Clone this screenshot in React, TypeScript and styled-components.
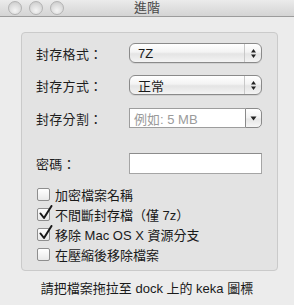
import styled, { createGlobalStyle } from "styled-components";

const GlobalStyle = createGlobalStyle`
  html, body {
    margin: 0;
    padding: 0;
    background: #ececec;
  }
  body {
    font-family: "Liberation Sans", "Noto Sans CJK TC", sans-serif;
    font-size: 13px;
    color: #1a1a1a;
    text-spacing-trim: space-all;
  }
`;

const Window = styled.div`
  width: 294px;
  height: 305px;
  background: #ececec;
  display: flex;
  flex-direction: column;
  overflow: hidden;
`;

const TitleBar = styled.div`
  height: 16px;
  flex-shrink: 0;
  position: relative;
  display: flex;
  align-items: center;
  justify-content: center;
  background: linear-gradient(#ebebeb, #d4d4d4);
  border-bottom: 1px solid #9c9c9c;
`;

const Lights = styled.div`
  position: absolute;
  left: 8px;
  top: 1px;
  display: flex;
  gap: 7px;
`;

const Light = styled.div`
  width: 12px;
  height: 12px;
  border-radius: 50%;
  border: 1px solid #b3b3b3;
  background: radial-gradient(circle at 50% 70%, #f4f4f4 0%, #dcdcdc 55%, #c4c4c4 100%);
`;

const Title = styled.div`
  font-size: 13px;
  color: #4a4a4a;
  line-height: 16px;
`;

const GroupBox = styled.div`
  margin: 15px 16px 0 21px;
  height: 239px;
  box-sizing: border-box;
  background: #e3e3e3;
  border: 1px solid #cacaca;
  border-radius: 4px;
  padding: 10px 15px 0 14px;
  display: flex;
  flex-direction: column;
`;

const FieldRow = styled.div<{ $top?: number }>`
  display: flex;
  align-items: center;
  height: 20px;
  margin-top: ${(p) => p.$top ?? 0}px;
`;

const Label = styled.div`
  width: 93px;
  flex-shrink: 0;
  font-size: 13px;
  color: #1e1e1e;
  letter-spacing: 0.3px;
`;

const PopUp = styled.div`
  width: 134px;
  height: 20px;
  box-sizing: border-box;
  border: 1px solid #8a8a8a;
  border-radius: 6px;
  background: linear-gradient(#ffffff 0%, #f3f3f3 45%, #e4e4e4 55%, #f4f4f4 100%);
  display: flex;
  align-items: center;
  box-shadow: 0 1px 0 rgba(0, 0, 0, 0.08);
`;

const PopUpText = styled.div`
  flex: 1;
  padding-left: 8px;
  font-size: 13px;
  color: #1a1a1a;
`;

const Arrows = styled.div`
  width: 16px;
  height: 100%;
  border-left: 1px solid #c8c8c8;
  display: flex;
  align-items: center;
  justify-content: center;
`;

const Combo = styled.div`
  width: 134px;
  height: 20px;
  display: flex;
`;

const ComboField = styled.div`
  flex: 1;
  box-sizing: border-box;
  background: #fff;
  border: 1px solid #9d9d9d;
  border-right: none;
  font-size: 13px;
  color: #9b9b9b;
  padding-left: 4px;
  display: flex;
  align-items: center;
`;

const ComboButton = styled.div`
  width: 17px;
  box-sizing: border-box;
  border: 1px solid #8a8a8a;
  border-radius: 0 5px 5px 0;
  background: linear-gradient(#ffffff 0%, #f1f1f1 50%, #e6e6e6 55%, #f6f6f6 100%);
  display: flex;
  align-items: center;
  justify-content: center;
`;

const TextField = styled.div`
  width: 134px;
  height: 21px;
  box-sizing: border-box;
  background: #fff;
  border: 1px solid #a5a5a5;
  border-top-color: #8c8c8c;
`;

const CheckList = styled.div`
  margin-top: 11px;
  display: flex;
  flex-direction: column;
`;

const CheckRow = styled.div`
  height: 20px;
  display: flex;
  align-items: center;
  gap: 5px;
  font-size: 13px;
  color: #1a1a1a;
  margin-left: 1px;
`;

const Box = styled.div`
  width: 13px;
  height: 13px;
  box-sizing: border-box;
  border: 1px solid #8e8e8e;
  border-radius: 2px;
  background: linear-gradient(#ffffff, #e9e9e9);
  position: relative;
  flex-shrink: 0;
`;

const Tick = styled.svg`
  position: absolute;
  left: 1px;
  top: -4px;
`;

const Footer = styled.div`
  flex: 1;
  display: flex;
  align-items: center;
  justify-content: center;
  font-size: 13px;
  color: #1a1a1a;
  padding-bottom: 1px;
`;

const UpDown = () => (
  <svg width="7" height="11" viewBox="0 0 7 11">
    <path d="M3.5 1 L6 4.5 L1 4.5 Z" fill="#222" />
    <path d="M3.5 10 L6 6.5 L1 6.5 Z" fill="#222" />
  </svg>
);

const Down = () => (
  <svg width="7" height="5" viewBox="0 0 7 5">
    <path d="M0.5 0.5 L6.5 0.5 L3.5 4.5 Z" fill="#222" />
  </svg>
);

const CheckBox = ({ checked, label }: { checked?: boolean; label: string }) => (
  <CheckRow>
    <Box>
      {checked && (
        <Tick width="14" height="15" viewBox="0 0 14 15">
          <path
            d="M1.5 8.5 L5 13 L12.5 1"
            fill="none"
            stroke="#1a1a1a"
            strokeWidth="2"
            strokeLinecap="round"
            strokeLinejoin="round"
          />
        </Tick>
      )}
    </Box>
    {label}
  </CheckRow>
);

export default function App() {
  return (
    <>
      <GlobalStyle />
      <Window>
        <TitleBar>
          <Lights>
            <Light />
            <Light />
            <Light />
          </Lights>
          <Title>進階</Title>
        </TitleBar>
        <GroupBox>
          <FieldRow>
            <Label>封存格式：</Label>
            <PopUp>
              <PopUpText>7Z</PopUpText>
              <Arrows>
                <UpDown />
              </Arrows>
            </PopUp>
          </FieldRow>
          <FieldRow $top={12}>
            <Label>封存方式：</Label>
            <PopUp>
              <PopUpText>正常</PopUpText>
              <Arrows>
                <UpDown />
              </Arrows>
            </PopUp>
          </FieldRow>
          <FieldRow $top={13}>
            <Label>封存分割：</Label>
            <Combo>
              <ComboField>例如: 5 MB</ComboField>
              <ComboButton>
                <Down />
              </ComboButton>
            </Combo>
          </FieldRow>
          <FieldRow $top={25}>
            <Label>密碼：</Label>
            <TextField />
          </FieldRow>
          <CheckList>
            <CheckBox label="加密檔案名稱" />
            <CheckBox checked label="不間斷封存檔（僅 7z）" />
            <CheckBox checked label="移除 Mac OS X 資源分支" />
            <CheckBox label="在壓縮後移除檔案" />
          </CheckList>
        </GroupBox>
        <Footer>請把檔案拖拉至 dock 上的 keka 圖標</Footer>
      </Window>
    </>
  );
}
